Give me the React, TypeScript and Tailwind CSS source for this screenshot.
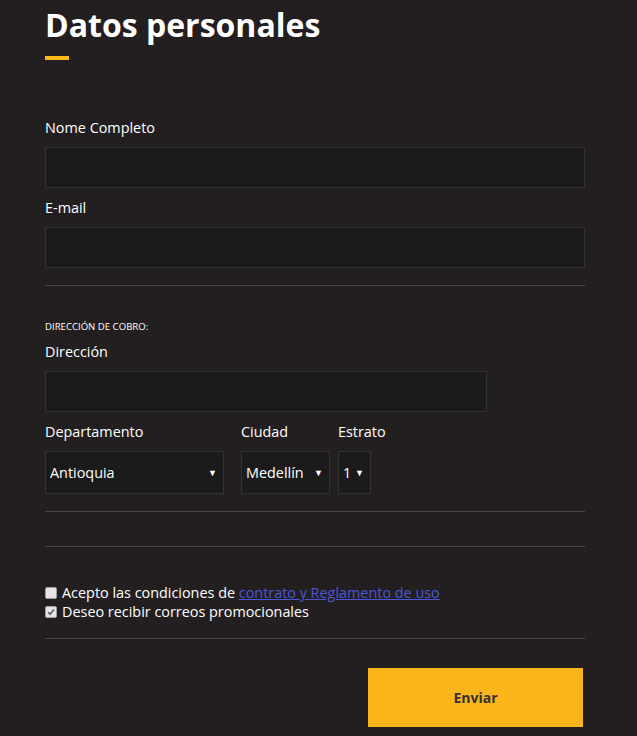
import React from 'react';

const font = { fontFamily: '"Open Sans", "Noto Sans", sans-serif' };

const Field = ({ label, width = 'w-[540px]' }: { label: string; width?: string }) => (
  <div className="flex flex-col">
    <label className="text-[14.4px] leading-[20px] text-white">{label}</label>
    <input
      className={`mt-[9px] h-[41px] ${width} border border-[#333232] bg-[#1c1b1b] px-2 text-white outline-none`}
    />
  </div>
);

const SelectBox = ({ label, value, width }: { label: string; value: string; width: string }) => (
  <div className="flex flex-col">
    <span className="text-[14.4px] leading-[20px] text-white">{label}</span>
    <div
      className={`mt-[9px] flex h-[43px] ${width} items-center justify-between border border-[#333232] bg-[#1c1b1b] pl-[4px] pr-[6px] text-[14.4px] text-white`}
    >
      <span>{value}</span>
      <span className="text-[9px] leading-none">▼</span>
    </div>
  </div>
);

const Check = ({ checked }: { checked?: boolean }) => (
  <span className="mr-[5px] inline-flex h-[12px] w-[12px] items-center justify-center rounded-[2px] border border-[#a0a0a0] bg-[#e6e6e6]">
    {checked && (
      <svg viewBox="0 0 12 12" className="h-[10px] w-[10px]">
        <path d="M2.5 6.2 L5 8.6 L9.6 3" fill="none" stroke="#555" strokeWidth="1.8" />
      </svg>
    )}
  </span>
);

export default function App() {
  return (
    <div className="min-h-[736px] w-full bg-[#231f20]" style={font}>
      <div className="w-[540px] pl-[45px] pt-[3px] box-content">
        <h1 className="text-[32px] font-bold leading-[44px] text-white">Datos personales</h1>
        <div className="mt-[9px] h-[4px] w-[24px] bg-[#fbb817]" />

        <div className="mt-[58px] flex flex-col gap-[10px]">
          <Field label="Nome Completo" />
          <Field label="E-mail" />
        </div>

        <hr className="mt-[17px] border-t border-[#4a4747]" />

        <p className="mt-[34px] text-[9.6px] uppercase leading-[13px] text-white">Dirección de cobro:</p>
        <div className="mt-[9px]">
          <Field label="Dirección" width="w-[442px]" />
        </div>

        <div className="mt-[10px] flex gap-[17px]">
          <SelectBox label="Departamento" value="Antioquia" width="w-[179px]" />
          <SelectBox label="Ciudad" value="Medellín" width="w-[89px]" />
          <div className="-ml-[9px]">
            <SelectBox label="Estrato" value="1" width="w-[33px]" />
          </div>
        </div>

        <hr className="mt-[17px] border-t border-[#4a4747]" />
        <hr className="mt-[34px] border-t border-[#4a4747]" />

        <div className="mt-[36px] flex flex-col text-[14.4px] leading-[19px] text-white">
          <div className="flex items-center">
            <Check />
            <span>
              Acepto las condiciones de{' '}
              <a href="#" className="text-[#4b57d8] underline">
                contrato y Reglamento de uso
              </a>
            </span>
          </div>
          <div className="flex items-center">
            <Check checked />
            <span>Deseo recibir correos promocionales</span>
          </div>
        </div>

        <hr className="mt-[17px] border-t border-[#4a4747]" />

        <div className="mt-[29px] flex justify-end">
          <button className="mr-[2px] h-[59px] w-[215px] bg-[#f9b51a] text-[14px] font-bold text-[#333]">
            Enviar
          </button>
        </div>
      </div>
    </div>
  );
}
